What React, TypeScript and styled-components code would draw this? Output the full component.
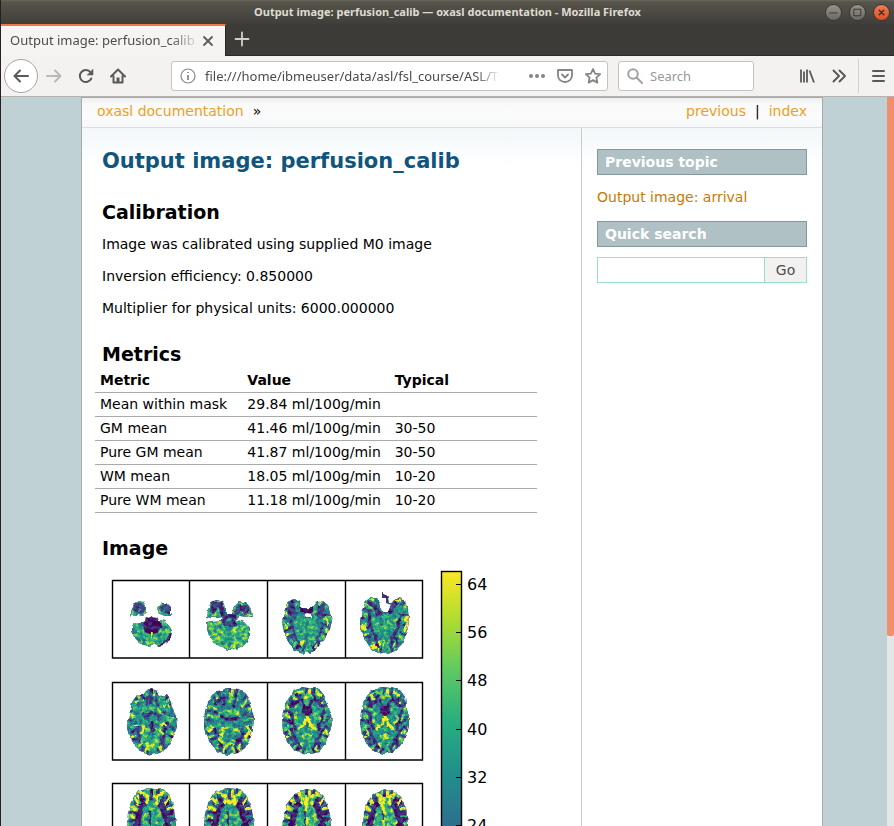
import React from "react";
import styled, { createGlobalStyle } from "styled-components";

const GlobalStyle = createGlobalStyle`
  * { box-sizing: border-box; }
  html, body { margin: 0; padding: 0; }
  body { background: #bfd1d4; }
  button, input { font: inherit; margin: 0; }
`;

/* ---------- browser window ---------- */

const Window = styled.div`
  display: flex;
  flex-direction: column;
  height: 100vh;
  overflow: hidden;
  border-left: 1px solid #251e23;
  font-family: "Noto Sans", sans-serif;
  font-size: 13px;
  color: #4b4a48;
`;

const TitleBar = styled.header`
  display: grid;
  grid-template-columns: 1fr auto 1fr;
  align-items: center;
  height: 24px;
  flex: none;
  padding: 0 4px;
  background: linear-gradient(#69665c 0, #57544b 2px, #3f3e39 100%);
`;

const WindowTitle = styled.h1`
  grid-column: 2;
  margin: 0;
  font-size: 11px;
  line-height: 22px;
  font-weight: 700;
  color: #dfdbd2;
`;

const WindowButtons = styled.div`
  display: flex;
  justify-content: flex-end;
  gap: 7px;
`;

const WindowButton = styled.button<{ $close?: boolean }>`
  display: grid;
  place-items: center;
  width: 17px;
  height: 17px;
  padding: 0;
  border: 1px solid #383731;
  border-radius: 50%;
  color: #35342f;
  background: ${(p) =>
    p.$close ? "linear-gradient(#f47b56, #e04e20)" : "linear-gradient(#94928a, #6b6963)"};
`;

const TabStrip = styled.div`
  display: flex;
  flex: none;
  height: 32px;
  background: #3c3b37;
  border-bottom: 1px solid #2a2926;
`;

const Tab = styled.div`
  display: flex;
  align-items: center;
  width: 225px;
  height: 32px;
  padding: 0 11px 0 9px;
  gap: 6px;
  background: #f5f4f2;
  border-top: 2px solid #f07746;
  border-right: 1px solid #2a2926;
`;

const TabLabel = styled.span`
  flex: 1;
  overflow: hidden;
  white-space: nowrap;
  color: #4c4c4c;
  line-height: 26px;
  padding-bottom: 2px;
  mask-image: linear-gradient(to right, #000 160px, transparent 190px);
`;

const IconButton = styled.button<{ $w?: number; $faint?: boolean }>`
  display: grid;
  place-items: center;
  flex: none;
  width: ${(p) => p.$w ?? 16}px;
  height: 30px;
  padding: 0;
  border: 0;
  background: none;
  color: ${(p) => (p.$faint ? "#b9b8b6" : "#5b5a58")};
`;

const NewTab = styled(IconButton)`
  width: 32px;
  color: #d2d0cb;
`;

const Toolbar = styled.div`
  display: flex;
  align-items: center;
  flex: none;
  height: 41px;
  padding: 0 10px 0 3px;
  background: #f4f2f1;
  border-bottom: 1px solid #b5b2af;
`;

const BackButton = styled(IconButton)`
  width: 34px;
  height: 34px;
  border: 1px solid #a9a7a5;
  border-radius: 50%;
  background: #fff;
`;

const NavGroup = styled.div`
  display: flex;
  align-items: center;
  gap: 16px;
  margin: 0 45px 0 8px;
`;

const Field = styled.div<{ $grow?: boolean }>`
  display: flex;
  align-items: center;
  height: 30px;
  flex: ${(p) => (p.$grow ? "1 1 0" : "0 0 136px")};
  min-width: 0;
  gap: ${(p) => (p.$grow ? 9 : 7)}px;
  padding: 0 6px 0 8px;
  margin-right: ${(p) => (p.$grow ? 10 : 45)}px;
  border: 1px solid #c6c3c0;
  border-radius: 3px;
  background: #fff;
  color: ${(p) => (p.$grow ? "#8a8988" : "#a3a2a1")};
`;

const FieldInput = styled.input<{ $fade?: boolean }>`
  flex: 1;
  min-width: 0;
  height: 28px;
  padding: 0;
  border: 0;
  outline: 0;
  background: none;
  color: #4b4b4b;
  ${(p) => p.$fade && "mask-image: linear-gradient(to left, transparent 20px, #000 44px);"}
  &::placeholder { color: #999897; opacity: 1; }
`;

const FieldActions = styled.div`
  display: flex;
  gap: 12px;
`;

const FieldAction = styled(IconButton)`
  color: #858483;
`;

const ToolEnd = styled.div`
  display: flex;
  align-items: center;
  gap: 16px;
`;

const Separator = styled.span`
  width: 1px;
  height: 34px;
  margin: 0 -5px;
  background: #d3d1cf;
`;

/* ---------- page ---------- */

const Viewport = styled.div`
  display: flex;
  flex: 1;
  min-height: 0;
  overflow: hidden;
  background: #bfd1d4;
`;

const Scrollbar = styled.div`
  flex: none;
  width: 7px;
  background: #e6e6e6;
`;

const Thumb = styled.div`
  height: 74%;
  border-radius: 0 0 2px 2px;
  background: #f08f6a;
`;

const Page = styled.div`
  flex: 1;
  display: flex;
  flex-direction: column;
  align-self: flex-start;
  min-width: 0;
  min-height: 100%;
  margin: 0 64px 0 80px;
  border: 1px solid #aaa;
  background: #fff;
  color: #000;
  font-family: "DejaVu Sans", Verdana, sans-serif;
  font-size: 14px;
  line-height: 21px;
`;

const Related = styled.nav`
  display: flex;
  justify-content: space-between;
  height: 30px;
  padding: 3px 15px;
  border-bottom: 1px solid #ddd;
  background: linear-gradient(#eeeff0 0, #fafafa 7px, #fbfbfb 70%, #f6f8f9 100%);
`;

const RelatedGroup = styled.div`
  display: flex;
  gap: 9px;
`;

const Link = styled.a<{ $deep?: boolean }>`
  color: ${(p) => (p.$deep ? "#ca7900" : "#eca01d")};
  text-decoration: none;
`;

const Columns = styled.div`
  display: flex;
  flex: 1;
  background: linear-gradient(#f2f7f9, #fff 38px);
`;

const Main = styled.main`
  flex: 1;
  min-width: 0;
  padding: 17px 20px 0;
`;

const Title = styled.h1`
  margin: 0;
  font-size: 21px;
  line-height: 32px;
  color: #11557c;
`;

const Heading = styled.h2`
  margin: 21px 0 0;
  font-size: 19px;
  line-height: 28px;
`;

const Para = styled.p`
  margin: 0 0 11px;
  &:last-child { margin: 0; }
`;

const Prose = styled.div`
  padding: 8px 0 0;
`;

const Table = styled.table`
  table-layout: fixed;
  width: 442px;
  margin: 0 -7px;
  border-collapse: collapse;
  th, td {
    height: 24px;
    padding: 0 5px;
    border-bottom: 1px solid #aaa;
    text-align: left;
    white-space: nowrap;
  }
  th { padding-top: 2px; }
`;

const Figure = styled.figure`
  margin: 0;
  padding-top: 4px;
  svg { display: block; }
`;

const Sidebar = styled.aside`
  width: 241px;
  flex: none;
  padding: 21px 15px;
  border-left: 1px solid #ccc;
`;

const SideHeading = styled.h3`
  margin: 0 0 12px;
  padding: 2px 7px;
  border: 1px solid #86989b;
  background: #afc1c4;
  color: #fff;
  font-size: 14px;
  line-height: 20px;
`;

const SideTopic = styled.p`
  margin: 0 0 13px;
`;

const SearchForm = styled.form`
  display: flex;
  height: 26px;
  margin-top: -2px;
  border: 1px solid #98dfcd;
`;

const SearchInput = styled.input`
  flex: 1;
  min-width: 0;
  padding: 0 4px;
  border: 0;
  outline: 0;
  background: #fff;
`;

const GoButton = styled.button`
  width: 42px;
  padding: 0;
  border: 0;
  border-left: 1px solid #98dfcd;
  background: #f2f1f0;
  color: #4c4c4c;
`;

/* ---------- perfusion maps ---------- */

const VIRIDIS = [
  "#440154", "#472d7b", "#3b528b", "#2c728e", "#21918c", "#28ae80", "#5ec962", "#addc30", "#fde725",
];
const channel = (i: number) =>
  VIRIDIS.map((c) => (parseInt(c.slice(1 + i * 2, 3 + i * 2), 16) / 255).toFixed(3)).join(" ");

type Stroke = { d: string; v: number; w?: number; fill?: boolean; both?: boolean };
type SliceSpec = { outline: string; base: number; gyri: boolean; marks: Stroke[] };

const gray = (v: number) => {
  const n = Math.round(v * 255);
  return `rgb(${n},${n},${n})`;
};

const CEREBELLUM =
  "M34 37L37 38L39 36L42 38L45 36L47 40L53 41L57 45L60 51L59 57L55 63L51 65L47 66L43 64L36 66L31 65L27 62L23 58L20 51L20 46L24 42L30 42L33 41Z";
const whiteMatter: Stroke[] = [
  { d: "M34 12C31 20 27 24 22 25M34 17C37 20 38 26 36 32", v: 0.06, w: 3, both: true },
  { d: "M22 29C27 33 25 40 29 48M24 46C26 55 32 61 34 67", v: 0.08, w: 3, both: true },
  { d: "M18 38L25 41M19 53L27 51M25 63L31 58M22 18L29 20", v: 0.1, w: 2, both: true },
  { d: "M40 24V36", v: 0, w: 5 },
  { d: "M30 29C27 35 28 41 33 44", v: 0.64, w: 3, both: true },
  { d: "M25 14L32 9M20 31L23 37M21 47L24 52", v: 0.85, w: 2, both: true },
];
const ventricle: Stroke[] = [
  { d: "M40 34L37 42L31 48M40 34L43 42L48 47", v: 1, w: 3 },
  { d: "M40 51V58M35 55L45 55", v: 0.75, w: 4 },
  { d: "M34 9L38 16L41 11L46 17", v: 0.75, w: 3 },
];
const frontal: Stroke[] = [
  { d: "M33 21C27 24 28 32 25 40V66", v: 0.02, w: 6, both: true },
  { d: "M22 19L31 25M18 29L28 31M18 37L27 39M28 13L33 24", v: 0.06, w: 3, both: true },
  { d: "M40 8V14M38 28V52", v: 0.08, w: 2 },
  { d: "M33 31C35 37 34 44 32 51", v: 0.6, w: 3, both: true },
  { d: "M22 15L28 21M18 24L25 27M27 8L36 14L35 21", v: 1, w: 3, both: true },
];

const SLICES: SliceSpec[] = [
  {
    outline:
      "M20 34L18 37L19 31L22 25L26 21L31 22L34 27L34 33L31 36L26 35L23 37ZM45 29L50 23L54 23L59 28L59 33L61 36L53 36L48 34Z" +
      CEREBELLUM,
    base: 0.55,
    gyri: false,
    marks: [
      { d: "M22 31L26 24L31 28L29 34M48 30L53 26L59 34", v: 0.15, w: 5 },
      { d: "M48 67L55 63L61 53", v: 0, w: 5 },
      { d: "M25 49L30 56L36 60M54 49L49 57", v: 0.72, w: 2 },
      { d: "M22 48L33 62M28 60L31 51", v: 0.42, w: 2 },
      { d: "M34 35L39 34L47 36L50 45L46 52L40 55L33 52L30 44Z", v: -1, fill: true },
      { d: "M40 52V58", v: 1, w: 2 },
    ],
  },
  {
    outline:
      "M16 37L17 30L20 25L23 21L28 20L32 22L36 28L36 34L42 34L44 27L49 22L56 22L61 30L62 38L57 37L48 36L47 40L55 42L60 48L60 55L57 62L52 67L45 69L39 70L31 67L24 63L19 56L17 49L17 42L23 41L32 40L33 37L27 38L22 38Z",
    base: 0.58,
    gyri: false,
    marks: [
      { d: "M22 33L25 23L31 26L33 34M46 34L50 27L57 29L56 35", v: 0.1, w: 5 },
      { d: "M34 36H44V44H34Z", v: 0.12, w: 5 },
      { d: "M36 46L38 54M29 44L32 49M39 61V68", v: 0.4, w: 2 },
      { d: "M44 47L47 61L44 68M21 44L25 53L30 62", v: 0.76, w: 3 },
      { d: "M18 37L21 32M57 32L61 37", v: 0.65, w: 2 },
    ],
  },
  {
    outline:
      "M15 41L17 32L19 25L24 20L28 19L32 22L35 28L45 28L50 22L56 21L61 25L63 33L65 41L63 49L58 58L52 66L47 71L43 74L40 71L36 74L28 71L22 64L18 55L16 48ZM36 35L38 37L45 37L44 34L40 33Z",
    base: 0.46,
    gyri: true,
    marks: [
      { d: "M25 23L24 33L30 36M54 25L54 34L49 37", v: 0.14, w: 7 },
      { d: "M33 30H46", v: 0, w: 6 },
      { d: "M40 38V55M33 38L30 51L35 59M47 38L49 52L44 60", v: 0.55, w: 7 },
      { d: "M24 40L28 56L34 69M56 42L52 57L46 68", v: 0.12, w: 2 },
      { d: "M37 60L34 67M20 49L18 42M61 46L60 39", v: 0.95, w: 2 },
    ],
  },
  {
    outline:
      "M15 41L17 29L21 21L26 17L31 18L34 23L36 29L37 32L43 32L45 27L48 21L54 17L60 21L63 28L64 42L62 53L57 64L50 71L43 74L38 72L31 73L24 67L18 57L15 48ZM37 18V13L40 15L43 18L44 23L46 22L47 25L41 23L41 18Z",
    base: 0.46,
    gyri: true,
    marks: [
      { d: "M24 22L31 28L34 36M53 20L46 28L46 34M37 13L43 22", v: 0.08, w: 5 },
      { d: "M40 37V53M32 39L31 52M48 39L49 51", v: 0.54, w: 8 },
      { d: "M24 29L25 45L30 56L33 68M56 33L53 47L47 59L47 66", v: 0.08, w: 3 },
      { d: "M16 45L21 51M60 38L64 42L60 50M27 64L30 69", v: 1, w: 4 },
      { d: "M39 60L38 68M24 19L29 20M50 21L55 20", v: 0.85, w: 2 },
    ],
  },
  {
    outline:
      "M15 40L18 29L20 20L25 13L31 13L34 9L38 7L44 8L47 14L55 13L59 19L60 26L64 34L65 45L61 56L55 66L48 71L40 73L31 71L23 64L17 54L15 46Z",
    base: 0.47,
    gyri: true,
    marks: [
      { d: "M39 9V23M36 14L34 24M43 14L46 25", v: 0.15, w: 3 },
      { d: "M28 29L34 34L40 30L47 34L54 29M23 40C29 44 22 51 31 62M57 40C49 45 56 53 48 63", v: 0.1, w: 3 },
      { d: "M20 36C31 34 30 25 37 26L40 28L45 25C48 34 55 33 61 37", v: 0.66, w: 2 },
      { d: "M37 47L30 60L37 66L47 59L42 46", v: 0.7, w: 4 },
      { d: "M23 43C33 40 33 49 28 52M55 43C46 40 45 49 52 52", v: 1, w: 2 },
      { d: "M37 42L43 49M40 39V50", v: 0, w: 3 },
      { d: "M23 20L31 18M54 18L58 28", v: 0.8, w: 2 },
    ],
  },
  {
    outline:
      "M14 40L15 29L18 20L22 13L27 9L34 8L37 6L47 8L54 10L59 17L61 26L64 35L63 47L60 57L55 66L48 71L39 73L29 71L21 63L16 53L14 46Z",
    base: 0.44,
    gyri: true,
    marks: [
      { d: "M34 12V24M46 12L43 26M28 16L30 22", v: 0.08, w: 3 },
      { d: "M24 30L34 36L40 38L50 35L57 30M22 45L29 52L30 66M51 46L53 53L44 65", v: 0.08, w: 3 },
      { d: "M27 38C30 28 35 29 40 29C46 28 51 33 53 39", v: 0.7, w: 3 },
      { d: "M29 48L39 46L50 49M34 49L29 57L36 64L44 58", v: 0.8, w: 3 },
      { d: "M40 10V21", v: 0.75, w: 3 },
      { d: "M56 43L61 52M55 55L60 50M18 50L24 45", v: 1, w: 3 },
    ],
  },
  {
    outline:
      "M15 39L16 29L19 20L24 13L28 7L35 5L41 6L48 6L54 9L58 16L61 25L64 31L65 42L62 53L58 62L52 70L44 72L35 71L27 68L20 60L16 50Z",
    base: 0.48,
    gyri: true,
    marks: [...whiteMatter, ...ventricle],
  },
  {
    outline:
      "M15 41L16 29L19 18L25 10L31 6L38 5L46 6L55 8L60 15L61 24L64 34L64 44L61 55L55 64L48 70L40 72L30 70L22 63L17 53Z",
    base: 0.46,
    gyri: true,
    marks: [...whiteMatter, ...ventricle],
  },
  {
    outline: "M15 43L16 29L19 19L24 10L30 6L38 5L42 6L49 6L56 10L60 18L62 26L64 42L62 58L50 71H30L18 58Z",
    base: 0.54,
    gyri: true,
    marks: frontal,
  },
  {
    outline: "M14 43L15 31L18 20L23 11L29 7L37 5L47 6L54 10L59 18L62 27L64 42L60 59L49 71H29L17 57Z",
    base: 0.52,
    gyri: true,
    marks: [...frontal, { d: "M34 20L37 17L40 20L43 17L46 20", v: 1, w: 3 }],
  },
  {
    outline: "M15 43L17 30L21 19L27 12L33 8L40 6L49 8L56 13L60 21L63 31L64 43L60 61L49 71H29L18 58Z",
    base: 0.56,
    gyri: true,
    marks: [...frontal, { d: "M39 12V27M40 34V48", v: 0.9, w: 3 }],
  },
  {
    outline: "M18 43L19 29L23 18L29 11L36 8L43 7L51 10L57 16L61 25L63 42L58 62L48 71H30L20 58Z",
    base: 0.6,
    gyri: true,
    marks: [...frontal, { d: "M39 14L38 22L40 32M38 37V52", v: 0.92, w: 3 }],
  },
];

/* Alternating bright and dark folds along the cortical rim. */
const folds = Array.from({ length: 34 }, (_, i) => {
  const a = (i / 34) * Math.PI * 2;
  const inner = 0.64 + ((i * 7) % 5) * 0.04;
  const point = (r: number, t: number) =>
    `${(40 + Math.cos(t) * 25 * r).toFixed(1)} ${(39 + Math.sin(t) * 34 * r).toFixed(1)}`;
  return {
    d: `M${point(inner, a)}L${point(0.97, a + (((i * 3) % 4) - 1.5) * 0.06)}`,
    v: i % 2 ? 0.1 : 0.68 + ((i * 5) % 4) * 0.1,
  };
});

const Slice = ({ spec, index, x, y }: { spec: SliceSpec; index: number; x: number; y: number }) => (
  <g transform={`translate(${x} ${y})`} filter="url(#voxel-edge)">
    <clipPath id={`brain-${index}`}>
      <path d={spec.outline} clipRule="evenodd" shapeRendering="crispEdges" />
    </clipPath>
    <g clipPath={`url(#brain-${index})`}>
      <g filter={`url(#viridis-${index % 4})`} fill="none" strokeLinejoin="round">
        <rect width="78" height="78" fill={gray(spec.base)} />
        {spec.gyri &&
          folds.map((f, i) => <path key={i} d={f.d} stroke={gray(f.v)} strokeWidth="2.5" />)}
        {spec.marks.map((m, i) => {
          const tone = gray(Math.max(0, m.v));
          const props = m.fill ? { fill: tone } : { stroke: tone, strokeWidth: m.w };
          return (
            <React.Fragment key={i}>
              <path d={m.d} {...props} />
              {m.both && <path d={m.d} {...props} transform="translate(80 0) scale(-1 1)" />}
            </React.Fragment>
          );
        })}
      </g>
      <path d={spec.outline} fill="none" stroke="#3c4277" strokeWidth="1" opacity=".75" />
    </g>
  </g>
);

const COLS = [10, 88, 165, 243];
const ROWS = [14, 116, 217];
const TICKS = [64, 56, 48, 40, 32, 24];
const tickY = (v: number) => Math.round(18 + (64 - v) * 6.03);

const PerfusionFigure = () => (
  <svg width="440" height="270" viewBox="0 0 440 270" role="img" aria-label="perfusion_calib">
    <defs>
      <filter
        id="voxel-edge"
        x="0"
        y="0"
        width="78"
        height="78"
        filterUnits="userSpaceOnUse"
        colorInterpolationFilters="sRGB"
      >
        <feTurbulence type="fractalNoise" baseFrequency="0.2" numOctaves="1" seed="5" />
        <feDisplacementMap in="SourceGraphic" scale="4" xChannelSelector="R" yChannelSelector="G" />
      </filter>
      {[3, 11, 24, 38].map((seed, i) => (
        <filter
          key={seed}
          id={`viridis-${i}`}
          x="0"
          y="0"
          width="78"
          height="78"
          filterUnits="userSpaceOnUse"
          colorInterpolationFilters="sRGB"
        >
          <feGaussianBlur in="SourceGraphic" stdDeviation="0.6" result="tissue" />
          <feTurbulence type="fractalNoise" baseFrequency="0.26" numOctaves="2" seed={seed} />
          <feColorMatrix values="1 0 0 0 0 1 0 0 0 0 1 0 0 0 0 0 0 0 0 1" result="noise" />
          <feComposite in="tissue" in2="noise" operator="arithmetic" k1="0.8" k2="0.6" k3="0.6" k4="-0.25" />
          <feColorMatrix values="1 0 0 0 0 0 1 0 0 0 0 0 1 0 0 0 0 0 0 1" />
          <feComponentTransfer>
            <feFuncR type="table" tableValues={channel(0)} />
            <feFuncG type="table" tableValues={channel(1)} />
            <feFuncB type="table" tableValues={channel(2)} />
          </feComponentTransfer>
        </filter>
      ))}
      <linearGradient id="scale" gradientUnits="userSpaceOnUse" x1="0" y1="404" x2="0" y2="5">
        {VIRIDIS.map((c, i) => (
          <stop key={c} offset={i / 8} stopColor={c} />
        ))}
      </linearGradient>
    </defs>
    {SLICES.map((spec, i) => (
      <Slice key={i} spec={spec} index={i} x={COLS[i % 4]} y={ROWS[Math.floor(i / 4)]} />
    ))}
    {ROWS.map((y) => (
      <path
        key={y}
        d={`M10.5 ${y + 0.5}H320.5V${y + 78}H10.5ZM87.5 ${y}v78M165.5 ${y}v78M243.5 ${y}v78`}
        fill="none"
        stroke="#000"
        strokeWidth="1.4"
      />
    ))}
    <rect x="339.5" y="5.5" width="20" height="400" fill="url(#scale)" stroke="#000" strokeWidth="1.4" />
    {TICKS.map((v) => (
      <g key={v}>
        <path d={`M354 ${tickY(v) + 0.5}h6`} stroke="#000" />
        <text x="365" y={tickY(v) + 6} fontSize="16" fontFamily="DejaVu Sans, sans-serif">
          {v}
        </text>
      </g>
    ))}
  </svg>
);

/* ---------- icons ---------- */

const Icon = ({
  d, w = 2, size = 16, children,
}: { d?: string; w?: number; size?: number; children?: React.ReactNode }) => (
  <svg
    width={size}
    height={size}
    viewBox="0 0 16 16"
    fill="none"
    stroke="currentColor"
    strokeWidth={w}
    strokeLinecap="round"
    strokeLinejoin="round"
    aria-hidden="true"
  >
    {d && <path d={d} />}
    {children}
  </svg>
);

const METRICS = [
  ["Mean within mask", "29.84 ml/100g/min", ""],
  ["GM mean", "41.46 ml/100g/min", "30-50"],
  ["Pure GM mean", "41.87 ml/100g/min", "30-50"],
  ["WM mean", "18.05 ml/100g/min", "10-20"],
  ["Pure WM mean", "11.18 ml/100g/min", "10-20"],
];

export default function App() {
  return (
    <>
      <GlobalStyle />
      <Window>
        <TitleBar>
          <WindowTitle>Output image: perfusion_calib — oxasl documentation - Mozilla Firefox</WindowTitle>
          <WindowButtons>
            <WindowButton aria-label="Minimize"><Icon size={15} w={1} d="M4 8.5h8" /></WindowButton>
            <WindowButton aria-label="Maximize"><Icon size={15} w={1} d="M4.500 4.500h7v7h-7z" /></WindowButton>
            <WindowButton $close aria-label="Close"><Icon size={15} w={1.5} d="M5.500 5.500l5 5M10.500 5.500l-5 5" /></WindowButton>
          </WindowButtons>
        </TitleBar>
        <TabStrip>
          <Tab>
            <TabLabel>Output image: perfusion_calib — oxasl documentation</TabLabel>
            <IconButton $w={14} aria-label="Close tab"><Icon w={1.8} d="M4 4l8 8M12 4l-8 8" /></IconButton>
          </Tab>
          <NewTab aria-label="New tab"><Icon w={1.8} d="M8 1.500v13M1.500 8h13" /></NewTab>
        </TabStrip>
        <Toolbar>
          <BackButton aria-label="Back"><Icon d="M15 8H1.500M7 2.500L1.500 8L7 13.500" /></BackButton>
          <NavGroup>
            <IconButton $faint aria-label="Forward"><Icon d="M1 8h13.500M9 2.500L14.500 8L9 13.500" /></IconButton>
            <IconButton aria-label="Reload">
              <Icon d="M13.300 10.500A6 6 0 1 1 12.500 4.200"><path d="M15 1.500v5.500h-5.500z" fill="currentColor" strokeWidth="0.6" /></Icon>
            </IconButton>
            <IconButton aria-label="Home">
              <Icon d="M1 8.500L8 1.500L15 8.500M3.500 8v6.500h9V8"><path d="M8 14V9.500" strokeWidth="3" strokeLinecap="butt" /></Icon>
            </IconButton>
          </NavGroup>
          <Field $grow>
            <Icon w={1.2}><circle cx="8" cy="8" r="7" /><path d="M8 7v5M8 4v1" strokeWidth="1.8" strokeLinecap="butt" /></Icon>
            <FieldInput $fade readOnly aria-label="Address" defaultValue="file:///home/ibmeuser/data/asl/fsl_course/ASL/T" />
            <FieldActions>
              <FieldAction aria-label="Page actions">
                <Icon><g fill="currentColor" stroke="none"><circle cx="2" cy="8" r="2" /><circle cx="8" cy="8" r="2" /><circle cx="14" cy="8" r="2" /></g></Icon>
              </FieldAction>
              <FieldAction aria-label="Save to Pocket">
                <Icon w={1.8} d="M1 2h14v5.500a7 6.500 0 0 1-14 0zM5 6.500l3 3l3-3" />
              </FieldAction>
              <FieldAction aria-label="Bookmark">
                <Icon w={1.8} d="M8 1l2.100 4.600l5 .6l-3.700 3.400l1 5L8 12.100l-4.400 2.500l1-5L.9 6.200l5-.6z" />
              </FieldAction>
            </FieldActions>
          </Field>
          <Field>
            <Icon w={2}><circle cx="6" cy="6" r="4.800" /><path d="M9.800 9.800L15 15" /></Icon>
            <FieldInput aria-label="Search" placeholder="Search" />
          </Field>
          <ToolEnd>
            <IconButton aria-label="Library">
              <Icon w={1.8}><path d="M2 1.500v13M5 3.500v11M8 1.500v13M10.500 2.500l4.500 12" strokeLinecap="butt" /></Icon>
            </IconButton>
            <IconButton aria-label="More tools"><Icon d="M2.500 2.500L8 8l-5.500 5.500M8.500 2.500L14 8l-5.500 5.500" /></IconButton>
            <Separator />
            <IconButton $w={14} aria-label="Menu"><Icon d="M3 3h11M3 8h11M3 13h11" /></IconButton>
          </ToolEnd>
        </Toolbar>
        <Viewport>
          <Page>
            <Related aria-label="Related">
              <RelatedGroup><Link href="#home">oxasl documentation</Link><span>»</span></RelatedGroup>
              <RelatedGroup><Link href="#previous">previous</Link><span>|</span><Link href="#index">index</Link></RelatedGroup>
            </Related>
            <Columns>
              <Main>
                <Title>Output image: perfusion_calib</Title>
                <Heading>Calibration</Heading>
                <Prose>
                  <Para>Image was calibrated using supplied M0 image</Para>
                  <Para>Inversion efficiency: 0.850000</Para>
                  <Para>Multiplier for physical units: 6000.000000</Para>
                </Prose>
                <Heading>Metrics</Heading>
                <Table>
                  <thead>
                    <tr><th scope="col">Metric</th><th scope="col">Value</th><th scope="col">Typical</th></tr>
                  </thead>
                  <tbody>
                    {METRICS.map((row) => (
                      <tr key={row[0]}>{row.map((cell, i) => <td key={i}>{cell}</td>)}</tr>
                    ))}
                  </tbody>
                </Table>
                <Heading>Image</Heading>
                <Figure><PerfusionFigure /></Figure>
              </Main>
              <Sidebar>
                <SideHeading>Previous topic</SideHeading>
                <SideTopic><Link $deep href="#arrival">Output image: arrival</Link></SideTopic>
                <SideHeading>Quick search</SideHeading>
                <SearchForm onSubmit={(e) => e.preventDefault()}>
                  <SearchInput type="text" aria-label="Quick search" />
                  <GoButton type="submit">Go</GoButton>
                </SearchForm>
              </Sidebar>
            </Columns>
          </Page>
          <Scrollbar><Thumb /></Scrollbar>
        </Viewport>
      </Window>
    </>
  );
}
